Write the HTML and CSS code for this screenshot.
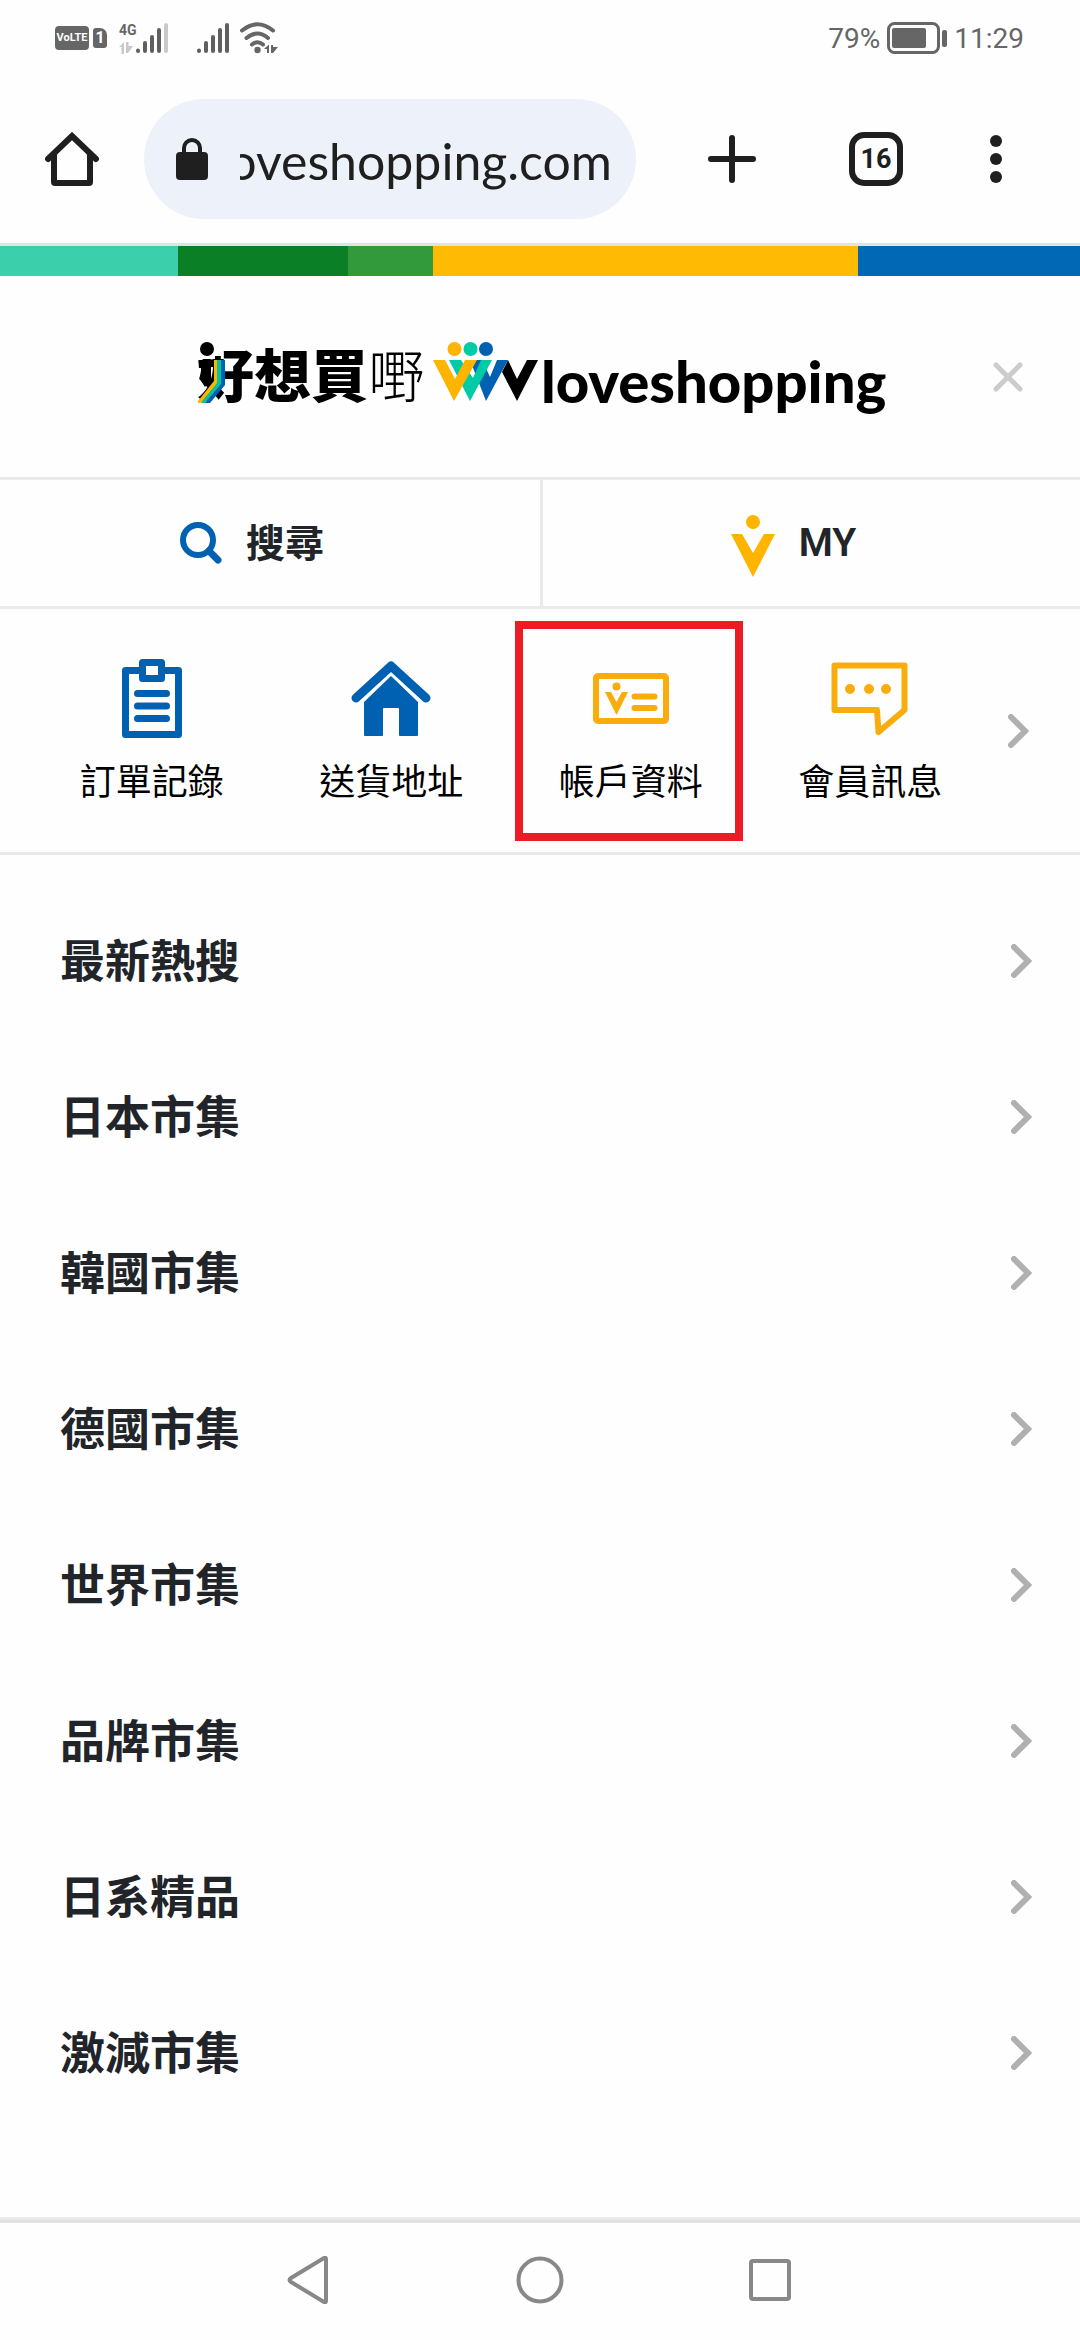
FILE: index.html
```html
<!DOCTYPE html>
<html lang="zh-Hant">
<head>
<meta charset="utf-8">
<meta name="viewport" content="width=device-width, initial-scale=1">
<title>好想買嘢 Vloveshopping</title>
<link rel="stylesheet" href="styles.css">
</head>
<body>
<div class="status">
  <div class="status-left">
    <span class="badge-volte">VoLTE</span>
    <span class="badge-sim">1</span>
    <span class="network">
      <span class="network-type">4G</span>
      <svg width="16" height="12" viewBox="0 0 16 12" fill="#c8c8c8"><path d="M0 5L5 0V12H2.500V5ZM8 0V12M7 0H9.500V4H14L9 11H7Z"/></svg>
    </span>
    <svg class="signal" width="34" height="32" viewBox="0 0 34 32" fill="none" stroke="#5f5f5f" stroke-width="4" stroke-linecap="round"><path d="M3 28.500V29M10 21V29M17 15V29M24 8V29"/><path d="M31 3V29" stroke="#c9c9c9"/></svg>
    <svg class="signal signal-second" width="34" height="32" viewBox="0 0 34 32" fill="none" stroke="#5f5f5f" stroke-width="4" stroke-linecap="round"><path d="M3 28.500V29M10 21V29M17 15V29M24 8V29M31 3V29"/></svg>
    <svg class="wifi" width="38" height="32" viewBox="0 0 38 32" fill="none" stroke="#666" stroke-width="4" stroke-linecap="round"><path d="M2 8.500Q17.500-4 33 8.500M6.500 16Q17.500 7 28 16M12 22.500Q17.500 18 23 22.500"/><circle cx="17.500" cy="28" r="3.200" fill="#666" stroke="none"/><path d="M24 27L29 22.500V31H27V27ZM31 23H33V25H38L33 31H31Z" fill="#666" stroke="none"/></svg>
  </div>
  <div class="status-right">
    <span>79%</span>
    <svg width="60" height="32" viewBox="0 0 60 32"><rect x="1.500" y="1.500" width="50" height="29" rx="6" fill="none" stroke="#666" stroke-width="3"/><rect x="5" y="6" width="34" height="20" rx="2" fill="#666"/><rect x="55" y="8" width="5" height="17" rx="2" fill="#666"/></svg>
    <span>11:29</span>
  </div>
</div>

<div class="toolbar">
  <button class="icon-button" aria-label="主頁"><svg width="54" height="54" viewBox="0 0 54 54" fill="none" stroke="#1f1f1f" stroke-width="6" stroke-linecap="round" stroke-linejoin="round"><path d="M9 24V50Q9 51 10 51H44Q45 51 45 50V24" /><path d="M3 27L27 4L51 27" stroke-linejoin="miter"/></svg></button>
  <div class="address">
    <svg width="32" height="42" viewBox="0 0 32 42"><rect y="14" width="32" height="28" rx="4" fill="#1f1f1f"/><path d="M8 16V10A8 8 0 0 1 24 10V16" fill="none" stroke="#1f1f1f" stroke-width="4"/></svg>
    <input class="url" type="text" dir="rtl" value="vloveshopping.com" aria-label="網址" readonly>
  </div>
  <button class="icon-button add" aria-label="新分頁"><svg width="50" height="50" viewBox="0 0 50 50" stroke="#1f1f1f" stroke-width="6" stroke-linecap="round"><path d="M4 25H46M25 4V46"/></svg></button>
  <button class="tabs" aria-label="16 個分頁">16</button>
  <button class="icon-button more" aria-label="更多"><svg width="12" height="48" viewBox="0 0 12 48" fill="#1f1f1f"><circle cx="6" cy="6" r="6"/><circle cx="6" cy="24" r="6"/><circle cx="6" cy="42" r="6"/></svg></button>
</div>

<div class="stripe"><span class="teal"></span><span class="forest"></span><span class="green"></span><span class="amber"></span><span class="blue"></span></div>

<header class="header">
  <a class="logo" href="#">
    <span class="logo-zh"><span class="heavy">好想買</span><span class="thin">嘢</span>
      <svg class="ribbon" width="30" height="64" viewBox="0 0 30 64"><path d="M0 0H18V18H0Z" fill="#fefefe"/><circle cx="10" cy="8" r="7"/><path d="M2 19H17V26H14V38L8 46L4 40V26H2Z"/><path d="M17 19H20V43L4 62H1V60L17 40Z" fill="#ffb400"/><path d="M20 19H24V44L8 62H4L20 42Z" fill="#00c5a2"/><path d="M24 19H28V44L13 62H8L24 43Z" fill="#0061b2"/></svg>
    </span>
    <svg class="mark" width="106" height="60" viewBox="0 0 106 60"><path d="M94 18H105L84 59L69 30L75 18L84 37Z"/><path d="M37 18H49L57 35L64 18H75L53 59Z" fill="#0061b2"/><path d="M16 18H28L40 36L48 18H59L37 59Z" fill="#00cba7"/><path d="M0 18H12L22 37L32 18H44L21 59Z" fill="#ffb400"/><circle cx="21.500" cy="7" r="7" fill="#ffb400"/><circle cx="37.500" cy="7" r="7" fill="#00cba7"/><circle cx="53" cy="7" r="7" fill="#0061b2"/></svg>
    <span class="logo-en">loveshopping</span>
  </a>
  <button class="icon-button" aria-label="關閉"><svg width="30" height="30" viewBox="0 0 30 30" stroke="#ccc" stroke-width="5" stroke-linecap="round"><path d="M3 3L27 27M27 3L3 27"/></svg></button>
</header>

<nav class="actions">
  <button class="action"><svg width="42" height="42" viewBox="0 0 42 42" fill="none" stroke="#0061b2" stroke-width="6"><circle cx="18" cy="18" r="15"/><path d="M29 29L38 38" stroke-width="7" stroke-linecap="round"/></svg><span class="label">搜尋</span></button>
  <button class="action"><svg width="44" height="68" viewBox="0 -6 44 68" fill="#ffb400"><circle cx="22" cy="7" r="7"/><path d="M0 19H11L22 38L33 19H44L22 62Z"/></svg>MY</button>
</nav>

<nav class="shortcuts">
  <ul class="shortcut-list">
    <li><a class="shortcut" href="#"><svg width="80" height="80" viewBox="0 0 80 80" fill="none" stroke="#0061b2" stroke-width="7" stroke-linecap="round" stroke-linejoin="round"><path d="M28 11.500H13.500V75.500H66.500V11.500H52M30.500 3.500H49.500V19.500H30.500ZM25.500 34.500H54.500M25.500 47H54.500M25.500 59.500H54.500"/></svg>訂單記錄</a></li>
    <li><a class="shortcut" href="#"><svg width="80" height="80" viewBox="0 0 80 80"><path d="M40 17L67 43V76Q67 77 66 77H49Q48 77 48 76V50Q48 49 47 49H33Q32 49 32 50V76Q32 77 31 77H14Q13 77 13 76V43Z" fill="#0061b2"/><path d="M5 39L40 7L75 39" fill="none" stroke="#0061b2" stroke-width="9" stroke-linecap="round" stroke-linejoin="round"/></svg>送貨地址</a></li>
    <li class="current"><a class="shortcut" href="#"><svg width="80" height="80" viewBox="0 0 80 80" fill="#faac0d"><rect x="5" y="17" width="70" height="45" rx="2" fill="none" stroke="#faac0d" stroke-width="6"/><circle cx="25.500" cy="27.500" r="4"/><path d="M14 33H20L25.500 43L31 33H37L25.500 56Z"/><path d="M43.500 37.500H63.500M43.500 49H63.500" stroke="#faac0d" stroke-width="6" stroke-linecap="round"/></svg>帳戶資料</a></li>
    <li><a class="shortcut" href="#"><svg width="80" height="80" viewBox="0 0 80 80" fill="#faac0d"><path d="M4.500 6.500H74.500V51L48.500 73L47 51H4.500Z" fill="none" stroke="#faac0d" stroke-width="6" stroke-linejoin="round"/><circle cx="20" cy="30" r="5"/><circle cx="39" cy="30" r="5"/><circle cx="56" cy="30" r="5"/></svg>會員訊息</a></li>
  </ul>
  <button class="icon-button" aria-label="下一頁"><svg width="21" height="34" viewBox="0 0 21 34" fill="none" stroke="#b0b0b0" stroke-width="6" stroke-linecap="round"><path d="M3 3L17 17L3 31"/></svg></button>
</nav>

<main class="main">
  <ul class="menu">
    <li><a class="menu-item" href="#"><span class="label">最新熱搜</span><svg width="21" height="34" viewBox="0 0 21 34"><path d="M3 3L17 17L3 31"/></svg></a></li>
    <li><a class="menu-item" href="#"><span class="label">日本市集</span><svg width="21" height="34" viewBox="0 0 21 34"><path d="M3 3L17 17L3 31"/></svg></a></li>
    <li><a class="menu-item" href="#"><span class="label">韓國市集</span><svg width="21" height="34" viewBox="0 0 21 34"><path d="M3 3L17 17L3 31"/></svg></a></li>
    <li><a class="menu-item" href="#"><span class="label">德國市集</span><svg width="21" height="34" viewBox="0 0 21 34"><path d="M3 3L17 17L3 31"/></svg></a></li>
    <li><a class="menu-item" href="#"><span class="label">世界市集</span><svg width="21" height="34" viewBox="0 0 21 34"><path d="M3 3L17 17L3 31"/></svg></a></li>
    <li><a class="menu-item" href="#"><span class="label">品牌市集</span><svg width="21" height="34" viewBox="0 0 21 34"><path d="M3 3L17 17L3 31"/></svg></a></li>
    <li><a class="menu-item" href="#"><span class="label">日系精品</span><svg width="21" height="34" viewBox="0 0 21 34"><path d="M3 3L17 17L3 31"/></svg></a></li>
    <li><a class="menu-item" href="#"><span class="label">激減市集</span><svg width="21" height="34" viewBox="0 0 21 34"><path d="M3 3L17 17L3 31"/></svg></a></li>
  </ul>
</main>

<footer class="system-nav">
  <button class="icon-button" aria-label="返回"><svg width="48" height="48" viewBox="0 0 48 48"><path d="M40 3V45Q40 47 38 46L5 26Q2 24 5 22L38 2Q40 1 40 3Z"/></svg></button>
  <button class="icon-button" aria-label="主畫面"><svg width="48" height="48" viewBox="0 0 48 48"><circle cx="24" cy="24" r="21.500"/></svg></button>
  <button class="icon-button" aria-label="最近使用"><svg width="48" height="48" viewBox="0 0 48 48"><rect x="5" y="5" width="38" height="38" rx="2"/></svg></button>
</footer>
</body>
</html>
```
FILE: styles.css
```css
* {
  box-sizing: border-box;
}

body {
  display: flex;
  flex-direction: column;
  min-height: 100vh;
  margin: 0;
  background: #fefefe;
  color: #212529;
  font-family: Roboto, "Noto Sans CJK TC", sans-serif;
}

svg {
  display: block;
  flex: none;
}

ul {
  margin: 0;
  padding: 0;
  list-style: none;
}

a {
  color: inherit;
  text-decoration: none;
}

button {
  padding: 0;
  border: 0;
  background: none;
  color: inherit;
  font: inherit;
}

.icon-button {
  display: flex;
  flex: none;
}

/* Status bar */
.status {
  display: flex;
  justify-content: space-between;
  height: 76px;
  padding: 0 56px 0 55px;
  color: #666;
}

.status-left,
.status-right {
  display: flex;
  align-items: center;
}

.badge-volte,
.badge-sim {
  background: #666;
  color: #fff;
  font-weight: 700;
  line-height: 24px;
  text-align: center;
}

.badge-volte {
  width: 34px;
  border-radius: 4px;
  font-size: 11px;
}

.badge-sim {
  width: 14px;
  margin: 0 12px 0 4px;
  border-radius: 3px 7px 3px 3px;
  font-size: 16px;
  line-height: 20px;
}

.network {
  display: grid;
  gap: 4px;
  width: 16px;
}

.network-type {
  font-size: 14px;
  font-weight: 700;
  line-height: 16px;
}

.signal-second {
  margin: 0 10px 0 27px;
}

.status-right {
  gap: 7px;
  font-size: 28px;
}

/* Browser toolbar */
.toolbar {
  display: flex;
  align-items: center;
  padding: 23px 78px 24px 45px;
}

.address {
  display: flex;
  flex: 1;
  align-items: center;
  gap: 32px;
  min-width: 0;
  height: 120px;
  margin: 0 71px 0 45px;
  padding: 0 24px 0 32px;
  border-radius: 60px;
  background: #ecf1fa;
}

.url {
  flex: 1;
  min-width: 0;
  height: 64px;
  padding: 4px 0 0;
  border: 0;
  outline: 0;
  background: none;
  color: #1f1f1f;
  font-family: Lato, sans-serif;
  font-size: 50px;
}

.tabs {
  flex: none;
  width: 54px;
  height: 54px;
  margin: 0 87px 0 92px;
  border: 6px solid #1f1f1f;
  border-radius: 15px;
  color: #1f1f1f;
  font-size: 27px;
  font-weight: 700;
}

/* Brand stripe */
.stripe {
  display: flex;
  height: 33px;
  border-top: 3px solid #dfe4df;
}

.teal {
  flex: 178;
  background: #3bcfab;
}

.forest {
  flex: 170;
  background: #0a7f26;
}

.green {
  flex: 85;
  background: #339a3b;
}

.amber {
  flex: 425;
  background: #ffba04;
}

.blue {
  flex: 222;
  background: #0068b5;
}

/* Site header */
.header {
  display: flex;
  align-items: center;
  justify-content: space-between;
  height: 204px;
  padding: 0 57px 0 197px;
  border-bottom: 3px solid #eaeaea;
}

.logo {
  display: flex;
  align-items: flex-start;
  color: #000;
}

.logo-zh {
  position: relative;
  display: flex;
  margin-right: 8px;
  font: 57px/60px "Noto Sans CJK TC", sans-serif;
}

.heavy {
  font-weight: 900;
}

.thin {
  font-weight: 300;
}

.ribbon {
  position: absolute;
  top: -1px;
  left: 0;
}

.mark {
  margin-right: 2px;
}

.logo-en {
  padding-top: 9px;
  font: 900 58px/60px Lato, sans-serif;
}

/* Search and account */
.actions {
  display: grid;
  grid-template-columns: 1fr 1fr;
  height: 129px;
  border-bottom: 3px solid #eaeaea;
}

.action {
  display: flex;
  align-items: center;
  justify-content: center;
  gap: 24px;
  padding-right: 36px;
  font-size: 39px;
  font-weight: 600;
}

.action + .action {
  border-left: 3px solid #eaeaea;
}

.label {
  padding-bottom: 6px;
}

/* Account shortcuts */
.shortcuts {
  display: flex;
  align-items: center;
  padding: 0 51px 0 32px;
  border-bottom: 3px solid #eaeaea;
}

.shortcut-list {
  display: grid;
  flex: 1;
  grid-template-columns: repeat(4, 1fr);
  margin-right: 18px;
}

.shortcut {
  display: flex;
  flex-direction: column;
  align-items: center;
  gap: 22px;
  padding: 50px 0 47px;
  color: #000;
  font-size: 36px;
  line-height: 44px;
}

.current {
  position: relative;
}

.current::after {
  position: absolute;
  inset: 12px 8px 11px 4px;
  border: 8px solid #ed1c24;
  content: "";
  pointer-events: none;
}

/* Category menu */
.main {
  flex: 1;
  padding: 28px 0;
}

.menu-item {
  display: flex;
  align-items: center;
  justify-content: space-between;
  height: 156px;
  padding: 0 48px 0 60px;
  font-size: 45px;
  font-weight: 700;
}

.menu-item svg {
  fill: none;
  stroke: #b0b0b0;
  stroke-width: 6px;
  stroke-linecap: round;
}

/* System navigation */
.system-nav {
  display: flex;
  justify-content: center;
  gap: 182px;
  padding: 33px 0 36px;
  border-top: 3px solid #e0e0e0;
  box-shadow: 0 -3px #eaeaea;
}

.system-nav svg {
  fill: none;
  stroke: #888;
  stroke-width: 4px;
}
```
